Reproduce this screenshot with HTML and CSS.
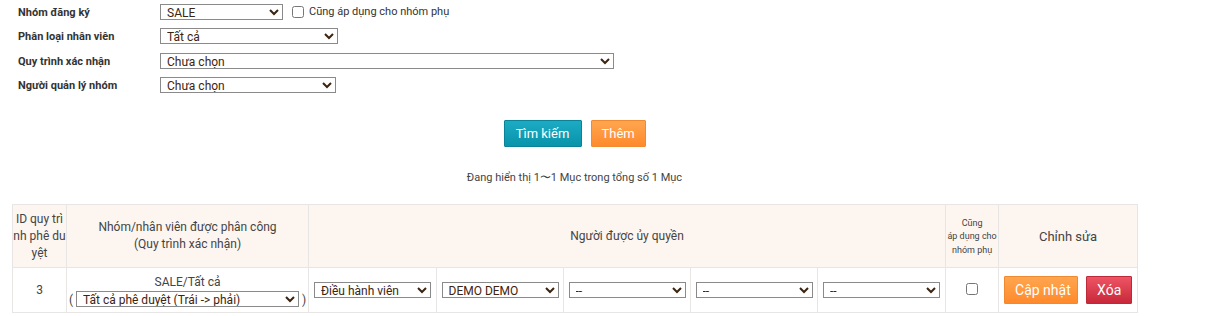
FILE: index.html
```html
<!DOCTYPE html>
<html lang="vi">
<head>
  <meta charset="UTF-8" />
  <title>Quy trình phê duyệt</title>
  <link rel="stylesheet" href="styles.css">
</head>
<body>
  <div class="filter">
    <div class="row">
      <label class="label">Nhóm đăng ký</label>
      <select class="sel w-group"><option>SALE</option></select>
      <label class="sub-check"><input type="checkbox" /> Cũng áp dụng cho nhóm phụ</label>
    </div>
    <div class="row">
      <label class="label">Phân loại nhân viên</label>
      <select class="sel w-type"><option>Tất cả</option></select>
    </div>
    <div class="row">
      <label class="label">Quy trình xác nhận</label>
      <select class="sel w-flow"><option>Chưa chọn</option></select>
    </div>
    <div class="row">
      <label class="label">Người quản lý nhóm</label>
      <select class="sel w-manager"><option>Chưa chọn</option></select>
    </div>
  </div>

  <div class="container">
    <div class="actions">
      <button class="btn btn-search">Tìm kiếm</button>
      <button class="btn btn-add">Thêm</button>
    </div>

    <div class="paging">Đang hiển thị 1〜1 Mục trong tổng số 1 Mục</div>

    <table class="list">
      <colgroup>
        <col style="width:54px">
        <col style="width:242px">
        <col style="width:128px">
        <col style="width:127px">
        <col style="width:127px">
        <col style="width:127px">
        <col style="width:128px">
        <col style="width:53px">
        <col style="width:139px">
      </colgroup>
      <thead>
        <tr>
          <th class="col-id">ID quy trình phê duyệt</th>
          <th>Nhóm/nhân viên được phân công<br>(Quy trình xác nhận)</th>
          <th colspan="5">Người được ủy quyền</th>
          <th class="col-sub">Cũng<br>áp dụng cho<br>nhóm phụ</th>
          <th class="col-edit">Chỉnh sửa</th>
        </tr>
      </thead>
      <tbody>
        <tr>
          <td>3</td>
          <td>
            <div class="group-name">SALE/Tất cả</div>
            <div class="flow">( <select class="sel w-flow-row"><option>Tất cả phê duyệt (Trái -&gt; phải)</option></select> )</div>
          </td>
          <td><select class="sel w-cell"><option>Điều hành viên</option></select></td>
          <td><select class="sel w-cell"><option>DEMO DEMO</option></select></td>
          <td><select class="sel w-cell"><option>--</option></select></td>
          <td><select class="sel w-cell"><option>--</option></select></td>
          <td><select class="sel w-cell"><option>--</option></select></td>
          <td><input type="checkbox" /></td>
          <td class="edit">
            <button class="btn btn-update">Cập nhật</button>
            <button class="btn btn-delete">Xóa</button>
          </td>
        </tr>
      </tbody>
    </table>
  </div>
</body>
</html>
```

FILE: styles.css
```css
/* Reset */
*, *::before, *::after {
  box-sizing: border-box;
}

body {
  margin: 0;
  font-family: Roboto, "Liberation Sans", sans-serif;
  font-size: 12px;
  color: #333;
  background: #fff;
}

/* Filter form */
.filter {
  padding: 4px 0 0 18px;
}

.row {
  display: flex;
  align-items: center;
  height: 24.3px;
}

.label {
  width: 142px;
  font-size: 11px;
  font-weight: bold;
  color: #333;
  align-self: flex-start;
  padding-top: 2px;
}

.row .sel {
  align-self: flex-start;
}

.sel {
  height: 16px;
  padding: 0 0 0 2px;
  font-family: Roboto, "Liberation Sans", sans-serif;
  font-size: 12px;
  color: #3c2410;
  background: #fff;
  border: 1px solid #8a8a8a;
  border-radius: 0;
}

.w-group { width: 123px; }
.w-type { width: 178px; }
.w-flow { width: 454px; }
.w-manager { width: 176px; }
.w-flow-row { width: 223px; }
.w-cell { width: 117px; }

.sub-check {
  display: flex;
  align-items: center;
  font-size: 11px;
  color: #333;
  margin-left: 6px;
  align-self: flex-start;
  margin-top: 1px;
}

.sub-check input {
  margin: 0 5px 0 3px;
  width: 12px;
  height: 12px;
}

/* Main block */
.container {
  margin-left: 12px;
  width: 1125px;
}

.actions {
  display: flex;
  justify-content: center;
  gap: 9px;
  margin-top: 19px;
}

.btn {
  height: 27px;
  padding: 0 10px;
  font-family: Roboto, "Liberation Sans", sans-serif;
  font-size: 13px;
  color: #fff;
  border-radius: 1px;
  cursor: pointer;
}

.btn-search {
  width: 78px;
  background: linear-gradient(#1cabc4, #0894aa);
  border: 1px solid #0a8398;
}

.btn-add {
  width: 55px;
  background: linear-gradient(#ffa64f, #ff8a2c);
  border: 1px solid #f08a32;
}

.paging {
  text-align: center;
  font-size: 11px;
  color: #444;
  margin-top: 23px;
}

/* Table */
.list {
  margin-top: 19px;
  width: 1125px;
  table-layout: fixed;
  border-collapse: collapse;
  border: 1px solid #e8e6e4;
}

.list th,
.list td {
  border: 1px solid #e8e6e4;
  text-align: center;
  vertical-align: middle;
  padding: 0;
}

.list th {
  height: 63px;
  background: #fdf5f0;
  font-weight: normal;
  font-size: 12px;
  line-height: 17px;
  color: #444;
}

.list th.col-id {
  word-break: break-all;
}

.list th.col-sub {
  font-size: 9px;
  line-height: 13.5px;
  padding-top: 2px;
}

.list th.col-edit {
  font-size: 13px;
}

.list td {
  height: 45px;
  color: #444;
}

.group-name {
  line-height: 14px;
  margin-top: 2px;
}

.flow {
  margin-top: 2px;
  font-size: 12px;
}

.list td input[type="checkbox"] {
  width: 12px;
  height: 12px;
  margin: 0;
}

.edit {
  white-space: nowrap;
}

.btn-update {
  width: 74px;
  height: 28px;
  font-size: 14px;
  background: linear-gradient(#ffa64f, #ff8a2c);
  border: 1px solid #f08a32;
}

.btn-delete {
  width: 46px;
  height: 28px;
  font-size: 14px;
  margin-left: 5px;
  background: linear-gradient(#ee5464, #c8283a);
  border: 1px solid #bc2a3a;
}
```
